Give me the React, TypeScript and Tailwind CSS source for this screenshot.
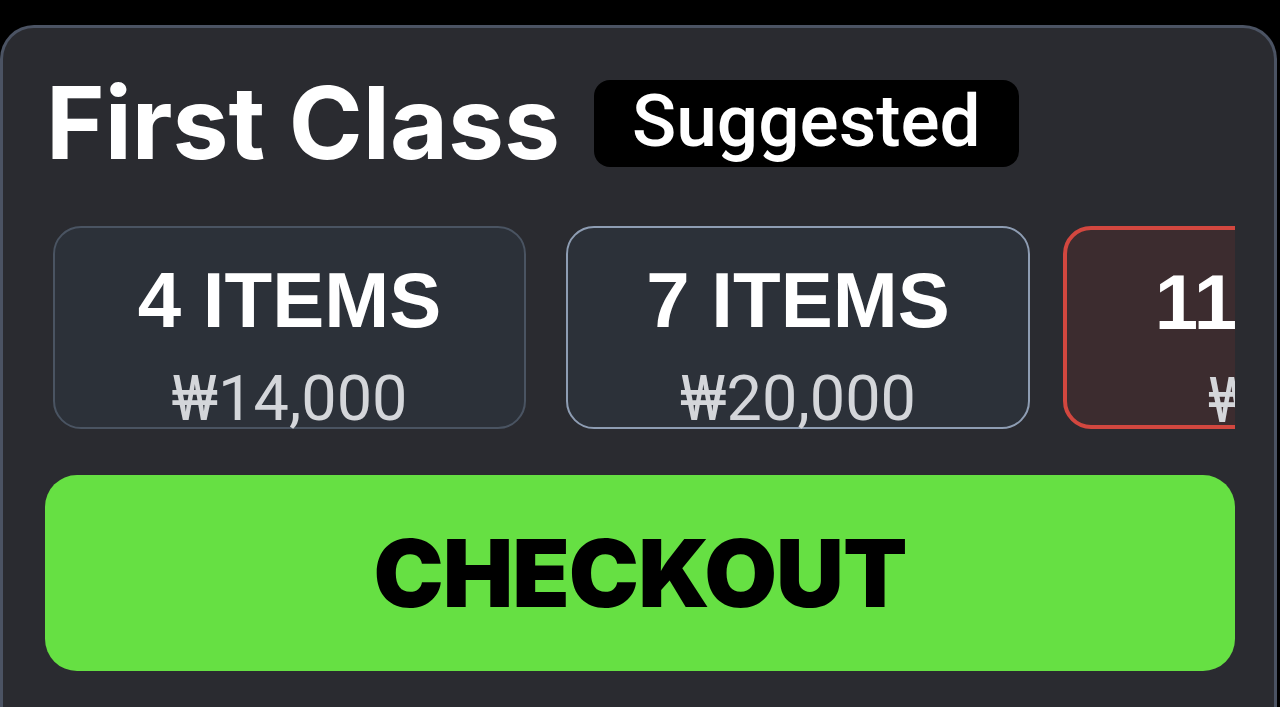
const plans = [
  { count: 4, price: "₩14,000", box: "w-[473px] border-2 border-[#4a5462] bg-[#2c3139]" },
  { count: 7, price: "₩20,000", box: "ml-[40px] w-[464px] border-2 border-[#8e9db3] bg-[#2c3139]" },
  { count: 11, price: "₩26,000", box: "ml-[33px] w-[526px] border-[4px] border-[#d2473f] bg-[#3c2c2f]" },
];

const App = () => {
  return (
    <div className="h-[707px] w-full overflow-hidden bg-black pt-[25px]">
      <div className="h-[720px] mr-[3px] rounded-t-[34px] border-x-[3px] border-t-[3px] border-[#4b5363] bg-[#2a2b30]">
        <div className="flex items-center pl-[43px] pt-[45px]">
          <h1
            className="text-[100px] font-bold leading-none text-white"
            style={{ fontFamily: "Inter, 'Noto Sans', sans-serif" }}
          >
            First Class
          </h1>
          <span
            className="ml-[34px] flex h-[87px] items-center rounded-[16px] bg-black px-[38px] pb-[2px] text-[73px] font-medium text-white"
            style={{ fontFamily: "Roboto, 'Liberation Sans', sans-serif" }}
          >
            Suggested
          </span>
        </div>

        <div className="mx-[42px] mt-[53px] w-[1190px] overflow-hidden">
          <div className="flex pl-[8px]">
            {plans.map((plan) => (
              <div
                key={plan.count}
                className={`flex h-[203px] shrink-0 flex-col items-center rounded-[28px] ${plan.box}`}
              >
                <div
                  className="mt-[33px] text-[78px] font-bold leading-none text-white"
                  style={{ fontFamily: "'Liberation Sans', Arial, sans-serif" }}
                >
                  {plan.count} ITEMS
                </div>
                <div
                  className="mt-[28px] text-[63px] leading-none text-[#d4d6da]"
                  style={{ fontFamily: "Roboto, 'Liberation Sans', sans-serif" }}
                >
                  {plan.price}
                </div>
              </div>
            ))}
          </div>
        </div>

        <button
          className="ml-[42px] mt-[46px] flex h-[196px] w-[1190px] items-center justify-center rounded-[32px] bg-[#66e043] text-[94px] font-black tracking-[-1px] text-black"
          style={{ fontFamily: "Inter, 'Noto Sans', sans-serif" }}
        >
          CHECKOUT
        </button>
      </div>
    </div>
  );
};

export default App;
